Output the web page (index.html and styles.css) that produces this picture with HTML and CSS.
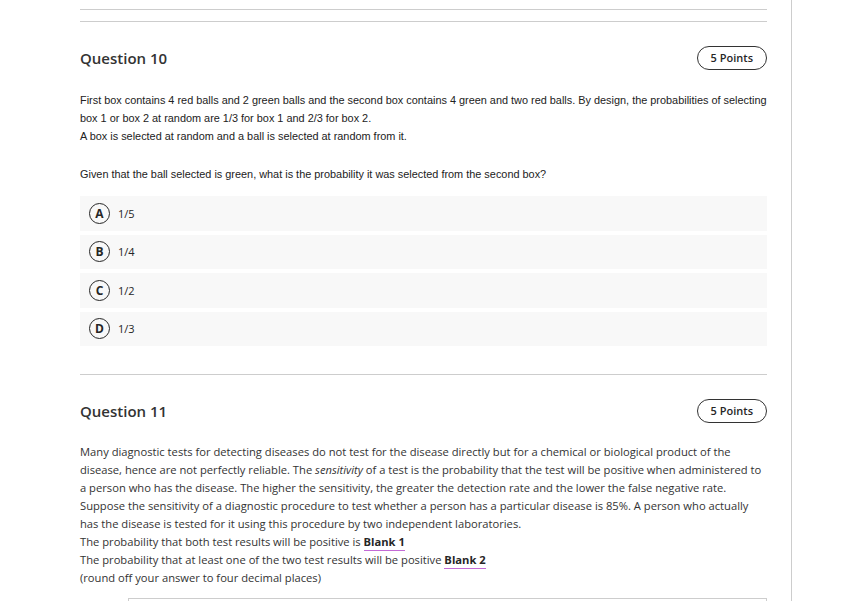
FILE: index.html
```html
<!DOCTYPE html>
<html>
<head>
<meta charset="utf-8">
<link rel="stylesheet" href="styles.css">
</head>
<body>
<div class="page">
  <div class="column">
    <div class="prev-end"></div>
    <section class="question">
      <div class="q-head">
        <h2 class="q-title">Question 10</h2>
        <span class="points">5 Points</span>
      </div>
      <div class="q-body arial">
        <p>First box contains 4 red balls and 2 green balls and the second box contains 4 green and two red balls. By design, the probabilities of selecting box 1 or box 2 at random are 1/3 for box 1 and 2/3 for box 2.</p>
        <p>A box is selected at random and a ball is selected at random from it.</p>
        <p class="blank-line">&nbsp;</p>
        <p>Given that the ball selected is green, what is the probability it was selected from the second box?</p>
      </div>
      <ul class="options">
        <li class="option"><span class="letter">A</span><span class="opt-text">1/5</span></li>
        <li class="option"><span class="letter">B</span><span class="opt-text">1/4</span></li>
        <li class="option"><span class="letter">C</span><span class="opt-text">1/2</span></li>
        <li class="option"><span class="letter">D</span><span class="opt-text">1/3</span></li>
      </ul>
    </section>
    <section class="question">
      <div class="q-head">
        <h2 class="q-title">Question 11</h2>
        <span class="points">5 Points</span>
      </div>
      <div class="q-body open">
        <p>Many diagnostic tests for detecting diseases do not test for the disease directly but for a chemical or biological product of the disease, hence are not perfectly reliable. The <em>sensitivity</em> of a test is the probability that the test will be positive when administered to a person who has the disease. The higher the sensitivity, the greater the detection rate and the lower the false negative rate. Suppose the sensitivity of a diagnostic procedure to test whether a person has a particular disease is 85%. A person who actually has the disease is tested for it using this procedure by two independent laboratories.</p>
        <p>The probability that both test results will be positive is <strong class="blank">Blank 1</strong></p>
        <p>The probability that at least one of the two test results will be positive <strong class="blank">Blank 2</strong></p>
        <p>(round off your answer to four decimal places)</p>
      </div>
      <div class="answer-box"></div>
    </section>
  </div>
</div>
</body>
</html>
```
FILE: styles.css
```css
html, body {
  margin: 0;
  padding: 0;
  background: #ffffff;
}
body {
  font-family: "Open Sans", "Liberation Sans", sans-serif;
  color: #262626;
  overflow: hidden;
  height: 601px;
}
.page {
  width: 791px;
  height: 601px;
  border-right: 1px solid #cdcdcd;
  overflow: hidden;
}
.column {
  margin-left: 80px;
  width: 687px;
}
.prev-end {
  height: 9px;
  border-bottom: 1px solid #cdcdcd;
}
.question {
  border-top: 1px solid #cdcdcd;
  margin-top: 11px;
  padding-top: 24px;
}
.question + .question {
  margin-top: 28px;
}
.q-head {
  display: flex;
  justify-content: space-between;
  align-items: center;
  height: 24px;
}
.q-title {
  margin: 0;
  font-size: 15px;
  font-weight: 600;
  color: #333333;
}
.points {
  box-sizing: border-box;
  height: 24px;
  padding: 0 13px;
  border: 1px solid #333333;
  border-radius: 12px;
  font-size: 11px;
  font-weight: 600;
  line-height: 22px;
  color: #262626;
}
.q-body {
  margin-top: 21px;
  font-size: 11px;
  line-height: 18px;
}
.q-body p {
  margin: 0;
}
.arial {
  font-family: "Liberation Sans", Arial, sans-serif;
  font-size: 10.9px;
  color: #222222;
}
.arial .blank-line {
  height: 20px;
}
.open {
  margin-top: 20px;
  font-family: "Open Sans", sans-serif;
  font-size: 11.2px;
  color: #333333;
}
.blank {
  font-weight: 700;
  color: #262626;
  border-bottom: 1px solid #c36bd6;
  padding-bottom: 1px;
}
.options {
  list-style: none;
  margin: 13px 0 0;
  padding: 0;
  display: flex;
  flex-direction: column;
  gap: 4px;
}
.option {
  display: flex;
  align-items: center;
  height: 34.5px;
  padding-left: 9px;
  background: #f8f8f8;
  gap: 8px;
}
.letter {
  box-sizing: border-box;
  width: 21px;
  height: 21px;
  border: 1.5px solid #262626;
  border-radius: 50%;
  display: flex;
  align-items: center;
  justify-content: center;
  font-size: 12px;
  font-weight: 700;
  color: #262626;
}
.opt-text {
  font-size: 11px;
  color: #262626;
}
.answer-box {
  margin: 11px 0 0 48px;
  height: 30px;
  border: 1px solid #cdcdcd;
}
```
